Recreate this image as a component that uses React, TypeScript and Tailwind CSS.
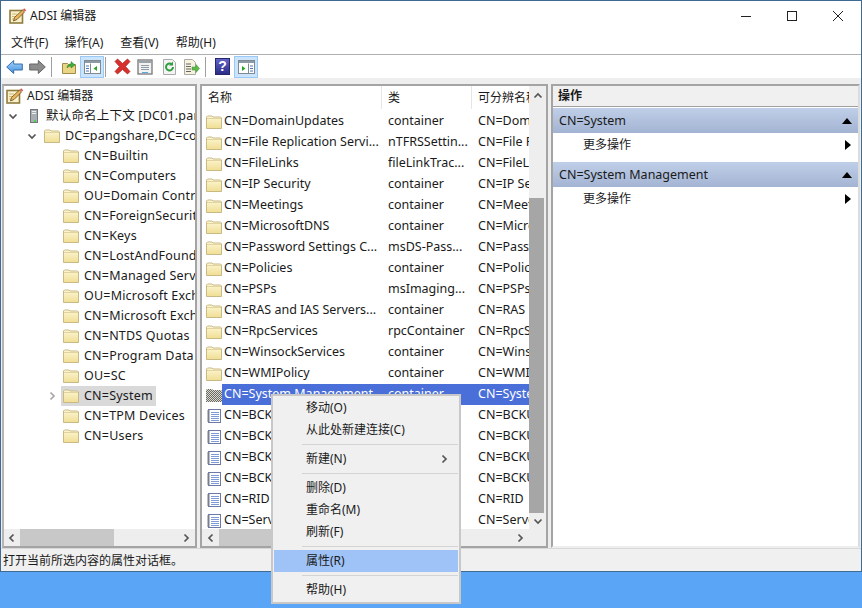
import React from "react";

const font = { fontFamily: '"Noto Sans", "Noto Sans CJK SC", sans-serif' };

function Folder({ hatched = false }: { hatched?: boolean }) {
  if (hatched) {
    return (
      <svg width="16" height="16" viewBox="0 0 16 16" className="shrink-0">
        <defs>
          <pattern id="hatch" width="2" height="2" patternUnits="userSpaceOnUse">
            <rect width="2" height="2" fill="#f0dc8c" />
            <rect width="1" height="1" fill="#5468a8" />
            <rect x="1" y="1" width="1" height="1" fill="#5468a8" />
          </pattern>
        </defs>
        <path d="M0 15V3l1-1h5l1 1h8l1 1v11z" fill="url(#hatch)" />
      </svg>
    );
  }
  return (
    <svg width="16" height="16" viewBox="0 0 16 16" className="shrink-0">
      <defs>
        <linearGradient id="fold" x1="0" y1="0" x2="0" y2="1">
          <stop offset="0" stopColor="#fdf7d6" />
          <stop offset="1" stopColor="#f0de93" />
        </linearGradient>
      </defs>
      <path d="M0.5 14.5V3l1-1h4.5l1 1h7.5l1 1v10.5z" fill="url(#fold)" stroke="#c9b985" />
      <path d="M1 4.5h14" stroke="#e2d49e" />
    </svg>
  );
}

function DocIcon() {
  return (
    <svg width="16" height="16" viewBox="0 0 16 16" className="shrink-0">
      <rect x="2.5" y="1.5" width="12" height="13" fill="#fff" stroke="#6d7aa8" />
      <path d="M1 3h3M1 5h3M1 7h3M1 9h3M1 11h3M1 13h3" stroke="#808080" />
      <path d="M5 4.5h8M5 6.5h8M5 8.5h8M5 10.5h8M5 12.5h8" stroke="#7f9bd6" />
    </svg>
  );
}

function AdsiIcon() {
  return (
    <svg width="18" height="18" viewBox="0 0 18 18" className="shrink-0">
      <rect x="1" y="3.5" width="12.5" height="12.5" fill="#f8f1cc" stroke="#8f7d3e" strokeWidth="1.6" />
      <path d="M3 7h5M3 9.5h4M3 12h3" stroke="#cdb974" />
      <path d="M4.5 14l1-3.5L13.5 3l2 2L8 12.5z" fill="#eab65c" stroke="#6b4a1e" strokeWidth="0.8" />
      <path d="M14 2.5l2 2 1.2-1.2-2-2z" fill="#d9534f" />
    </svg>
  );
}

function ServerIcon() {
  return (
    <svg width="12" height="16" viewBox="0 0 12 16" className="shrink-0 mr-[1px]">
      <rect x="2.5" y="1.5" width="7" height="13" fill="#a9aeb3" stroke="#70767b" />
      <path d="M4 3.5h4M4 5.5h4" stroke="#eceeef" />
      <rect x="6" y="12" width="2" height="2" fill="#4fd04f" />
    </svg>
  );
}

function Chevron({ dir, color = "#555" }: { dir: "down" | "right" | "left" | "up"; color?: string }) {
  const d = {
    down: "M1.5 3.5 5 7l3.5-3.5",
    right: "M3.5 1.5 7 5 3.5 8.5",
    left: "M6.5 1.5 3 5l3.5 3.5",
    up: "M1.5 6.5 5 3l3.5 3.5",
  }[dir];
  return (
    <svg width="10" height="10" viewBox="0 0 10 10" className="shrink-0">
      <path d={d} fill="none" stroke={color} strokeWidth="1.7" />
    </svg>
  );
}

function Tb({ children, active = false }: { children: React.ReactNode; active?: boolean }) {
  return (
    <div
      className={
        "w-[24px] h-[22px] flex items-center justify-center border " +
        (active ? "bg-[#cce4fb] border-[#99c9f8]" : "border-transparent")
      }
    >
      {children}
    </div>
  );
}

const PaneToggle = ({ right }: { right?: boolean }) => (
  <svg width="17" height="16" viewBox="0 0 17 16">
    <rect x="0.5" y="1.5" width="16" height="13" fill="#fff" stroke="#7e8a94" />
    <rect x="1" y="2" width="15" height="2" fill="#8d99a3" />
    {right ? (
      <>
        <path d="M4 7v5l3.5-2.5z" fill="#27a327" />
        <path d="M10.5 4.5v10" stroke="#7e8a94" />
        <path d="M12 7h3M12 9.5h3M12 12h3" stroke="#4a74b0" />
      </>
    ) : (
      <>
        <path d="M6.5 4.5v10" stroke="#7e8a94" />
        <path d="M2 7h3M2 9.5h3M2 12h3" stroke="#4a74b0" />
        <path d="M13 7v5l-3.5-2.5z" fill="#27a327" />
      </>
    )}
  </svg>
);

function Toolbar() {
  return (
    <div className="h-[23px] flex items-center bg-white pl-[5px] shrink-0">
      <svg width="17" height="16" viewBox="0 0 17 16">
        <defs>
          <linearGradient id="bk" x1="0" y1="0" x2="0" y2="1">
            <stop offset="0" stopColor="#a8d4fa" />
            <stop offset="1" stopColor="#3f8fe0" />
          </linearGradient>
        </defs>
        <path d="M0.7 8l7-6.5V5h8.6v6H7.7v3.5z" fill="url(#bk)" stroke="#3a6ea8" />
      </svg>
      <svg width="17" height="16" viewBox="0 0 17 16" className="ml-[6px]">
        <path d="M16.3 8l-7-6.5V5H0.7v6h8.6v3.5z" fill="#8c8c8c" stroke="#666" />
      </svg>
      <div className="w-px h-[20px] bg-[#a0a0a0] ml-[5px]" />
      <div className="ml-[9px] mr-[3px]">
        <svg width="16" height="16" viewBox="0 0 16 16" className="block">
          <path d="M1.5 14.5v-10h5l1 1h7v9z" fill="#e9d583" stroke="#a08c4a" />
          <path d="M6 9c0-3 2-4 4-4V2.5l4 3.5-4 3V7c-2 0-3 1-4 2z" fill="#3fae3f" stroke="#2a7a2a" strokeWidth="0.5" />
        </svg>
      </div>
      <Tb active>
        <PaneToggle />
      </Tb>
      <div className="w-px h-[20px] bg-[#a0a0a0] ml-[1px]" />
      <div className="ml-[8px] flex items-center">
        <svg width="17" height="17" viewBox="0 0 17 17" className="block">
          <path d="M1 3.5 3.5 1 8.5 5.5 13.5 1 16 3.5 11.5 8.5 16 13.5 13.5 16 8.5 11.5 3.5 16 1 13.5 5.5 8.5z" fill="#d8302c" stroke="#a82020" strokeWidth="0.7" />
        </svg>
      </div>
      <div className="ml-[6px]">
        <svg width="16" height="16" viewBox="0 0 16 16" className="block">
          <rect x="1" y="1" width="14" height="14" fill="#f2f2f2" stroke="#808080" strokeWidth="1.4" />
          <rect x="2" y="2" width="12" height="2" fill="#9aa3ab" />
          <path d="M4 6.5h8M4 8.5h8M4 10.5h8" stroke="#8d9aa8" />
          <rect x="5" y="13" width="6" height="1" fill="#5aa8e0" />
        </svg>
      </div>
      <div className="ml-[9px]">
        <svg width="15" height="16" viewBox="0 0 15 16" className="block">
          <path d="M1.5 0.5h9l3 3v12h-12z" fill="#f4f4f4" stroke="#aaa" />
          <path d="M11 8a3.5 3.5 0 1 1-1-2.5" fill="none" stroke="#2f9e3f" strokeWidth="2" />
          <path d="M11 2.5v4H7z" fill="#2f9e3f" />
        </svg>
      </div>
      <div className="ml-[6px]">
        <svg width="17" height="16" viewBox="0 0 17 16" className="block">
          <path d="M1.5 0.5h8l3 3v12h-11z" fill="#f6f2dc" stroke="#aaa" />
          <path d="M3 5h5M3 7.5h5M3 10h5M3 12.5h5" stroke="#666" />
          <path d="M9 8h4V5.5l3.5 4-3.5 4V11H9z" fill="#5dbb4a" stroke="#3c8c30" strokeWidth="0.5" />
        </svg>
      </div>
      <div className="w-px h-[20px] bg-[#a0a0a0] ml-[5px]" />
      <div className="ml-[9px] mr-[4px]">
        <div
          className="w-[15px] h-[17px] bg-gradient-to-b from-[#6464c8] to-[#2c2c88] border border-[#26266a] text-white text-[14px] font-bold leading-[15px] text-center"
          style={{ fontFamily: '"Liberation Sans", sans-serif' }}
        >
          ?
        </div>
      </div>
      <Tb active>
        <PaneToggle right />
      </Tb>
    </div>
  );
}

function TreeRow({
  indent,
  chevron,
  icon,
  label,
  selected = false,
  iconGap = 0,
}: {
  indent: number;
  chevron?: "down" | "right";
  icon: React.ReactNode;
  label: string;
  selected?: boolean;
  iconGap?: number;
}) {
  return (
    <div className="h-[20px] flex items-center whitespace-nowrap" style={{ paddingLeft: indent }}>
      <div className="w-[14px] pr-[4px] flex justify-center shrink-0">
        {chevron && <Chevron dir={chevron} color={selected ? "#a6a6a6" : "#555"} />}
      </div>
      <div
        className={"flex items-center h-[20px] pl-[2px] pr-[3px] " + (selected ? "bg-[#d9d9d9]" : "")}
      >
        <div className="flex shrink-0" style={{ marginLeft: iconGap }}>
          {icon}
        </div>
        <span className="ml-[5px] tracking-[0.2px]">{label}</span>
      </div>
    </div>
  );
}

const treeItems = [
  "CN=Builtin",
  "CN=Computers",
  "OU=Domain Controllers",
  "CN=ForeignSecurityPrincipals",
  "CN=Keys",
  "CN=LostAndFound",
  "CN=Managed Service Accounts",
  "OU=Microsoft Exchange",
  "CN=Microsoft Exchange",
  "CN=NTDS Quotas",
  "CN=Program Data",
  "OU=SC",
  "CN=System",
  "CN=TPM Devices",
  "CN=Users",
];

const rows: [string, string, string][] = [
  ["CN=DomainUpdates", "container", "CN=DomainUpdates"],
  ["CN=File Replication Servi...", "nTFRSSettin...", "CN=File Replication"],
  ["CN=FileLinks", "fileLinkTrac...", "CN=FileLinks"],
  ["CN=IP Security", "container", "CN=IP Security"],
  ["CN=Meetings", "container", "CN=Meetings"],
  ["CN=MicrosoftDNS", "container", "CN=MicrosoftDNS"],
  ["CN=Password Settings C...", "msDS-Pass...", "CN=Password"],
  ["CN=Policies", "container", "CN=Policies"],
  ["CN=PSPs", "msImaging...", "CN=PSPs"],
  ["CN=RAS and IAS Servers...", "container", "CN=RAS"],
  ["CN=RpcServices", "rpcContainer", "CN=RpcServices"],
  ["CN=WinsockServices", "container", "CN=WinsockServices"],
  ["CN=WMIPolicy", "container", "CN=WMIPolicy"],
  ["CN=System Management", "container", "CN=System"],
  ["CN=BCKUPKEY_1", "secret", "CN=BCKUPKEY"],
  ["CN=BCKUPKEY_2", "secret", "CN=BCKUPKEY"],
  ["CN=BCKUPKEY_3", "secret", "CN=BCKUPKEY"],
  ["CN=BCKUPKEY_4", "secret", "CN=BCKUPKEY"],
  ["CN=RID Manager$", "rIDManager", "CN=RID"],
  ["CN=Server", "samServer", "CN=Server"],
];

function ListRow({ r, i }: { r: [string, string, string]; i: number }) {
  const selected = i === 13;
  const doc = i > 13;
  return (
    <div className="h-[21px] flex items-center whitespace-nowrap shrink-0">
      <div className="w-[20px] pl-[4px] shrink-0 flex">
        {doc ? <DocIcon /> : <Folder hatched={selected} />}
      </div>
      <div className={"flex h-[21px] items-center flex-1 min-w-0 " + (selected ? "bg-[#4a6fd8] text-white" : "")}>
        <div className="w-[166px] pl-[2px] overflow-hidden shrink-0">{r[0]}</div>
        <div className="w-[90px] overflow-hidden shrink-0">{r[1]}</div>
        <div className="flex-1 min-w-0 overflow-hidden">{r[2]}</div>
      </div>
    </div>
  );
}

function HScroll({ pad, thumb, grow }: { pad: number; thumb: number; grow?: boolean }) {
  return (
    <div className="h-[17px] bg-[#eeeeee] flex items-center shrink-0">
      <div className="flex justify-center shrink-0" style={{ width: pad }}>
        <Chevron dir="left" />
      </div>
      <div className="h-[17px] bg-[#c8c8c8] shrink-0" style={{ width: thumb }} />
      <div className="flex-1" />
      <div className="flex justify-center w-[19px] shrink-0">
        <Chevron dir="right" />
      </div>
      {grow && <div className="w-[17px] shrink-0" />}
    </div>
  );
}

function ActionGroup({ title }: { title: string }) {
  return (
    <div className="mb-[7px]">
      <div className="h-[25px] bg-gradient-to-b from-[#c0cfe8] to-[#a3b4d3] flex items-center pl-[6px] pr-[6px] justify-between">
        <span className="pt-[1px]">{title}</span>
        <svg width="10" height="6" viewBox="0 0 10 6">
          <path d="M0 6 5 0l5 6z" fill="#000" />
        </svg>
      </div>
      <div className="h-[22px] flex items-center pt-[2px] pl-[30px] pr-[7px] justify-between text-[12px]">
        <span>更多操作</span>
        <svg width="6" height="10" viewBox="0 0 6 10">
          <path d="M0 0l6 5-6 5z" fill="#000" />
        </svg>
      </div>
    </div>
  );
}

function MenuItem({
  label,
  active = false,
  arrow = false,
}: {
  label: string;
  active?: boolean;
  arrow?: boolean;
}) {
  return (
    <div className={"h-[22px] flex items-center pl-[32px] pr-[9px] justify-between " + (active ? "bg-[#9fc3f6]" : "")}>
      <span>{label}</span>
      {arrow && <Chevron dir="right" color="#555" />}
    </div>
  );
}

const MenuSep = () => <div className="h-px bg-[#d4d4d4] ml-[28px] my-[3px]" />;

export default function App() {
  return (
    <div
      className="relative w-[862px] h-[608px] overflow-hidden bg-[#5aa5f5] text-[12.5px] text-[#1a1a1a]"
      style={font}
    >
      <div className="w-[862px] h-[572px] bg-white border border-[#3f6a94] flex flex-col">
        {/* title */}
        <div className="h-[31px] flex items-center pl-[8px] pb-[1px] shrink-0 bg-white text-[12px]">
          <AdsiIcon />
          <span className="ml-[3px]">ADSI 编辑器</span>
          <div className="flex-1" />
          <svg width="12" height="12" viewBox="0 0 12 12" className="mr-[34px]">
            <path d="M1 6.5h10" stroke="#222" />
          </svg>
          <svg width="12" height="12" viewBox="0 0 12 12" className="mr-[34px]">
            <rect x="1.5" y="1.5" width="9" height="9" fill="none" stroke="#222" />
          </svg>
          <svg width="12" height="12" viewBox="0 0 12 12" className="mr-[17px]">
            <path d="M1 1l10 10M11 1 1 11" stroke="#222" />
          </svg>
        </div>
        {/* menu */}
        <div className="h-[23px] flex items-center pl-[10px] gap-[17px] border-b border-[#b0b0b0] shrink-0 bg-white text-[12px]">
          <span className="-mr-[1px]">文件(F)</span>
          <span>操作(A)</span>
          <span>查看(V)</span>
          <span>帮助(H)</span>
        </div>
        <Toolbar />
        {/* main */}
        <div className="flex-1 min-h-0 bg-[#eeeeee] pt-[6px] flex gap-[3px] pl-[1px] pr-[1px]">
          {/* tree */}
          <div className="w-[195px] shrink-0 bg-white border-2 border-[#a4a4a4] border-l-[#b5b5b5] flex flex-col">
            <div className="flex-1 min-h-0 overflow-hidden">
              <div className="h-[20px] flex items-center pl-[2px] whitespace-nowrap">
                <AdsiIcon />
                <span className="ml-[3px] text-[12px]">ADSI 编辑器</span>
              </div>
              <TreeRow
                indent={4}
                chevron="down"
                iconGap={4}
                icon={<ServerIcon />}
                label="默认命名上下文 [DC01.pangshare,DC=com]"
              />
              <TreeRow indent={23} chevron="down" iconGap={1} icon={<Folder />} label="DC=pangshare,DC=com" />
              {treeItems.map((t) => (
                <TreeRow
                  key={t}
                  indent={43}
                  chevron={t === "CN=System" ? "right" : undefined}
                  icon={<Folder />}
                  label={t}
                  selected={t === "CN=System"}
                />
              ))}
            </div>
            <HScroll pad={16} thumb={94} />
          </div>
          {/* list */}
          <div className="w-[348px] shrink-0 bg-white border-2 border-[#a4a4a4] flex flex-col">
            <div className="flex-1 min-h-0 flex">
              <div className="flex-1 min-w-0 flex flex-col overflow-hidden">
                <div className="h-[25px] pb-[2px] shrink-0 flex items-center whitespace-nowrap text-[12px]">
                  <div className="w-[180px] pl-[6px] h-[23px] flex items-center border-r border-[#e5e5e5] shrink-0">名称</div>
                  <div className="w-[90px] pl-[6px] h-[23px] flex items-center border-r border-[#e5e5e5] shrink-0">类</div>
                  <div className="flex-1 pl-[6px] overflow-hidden">可分辨名称</div>
                </div>
                {rows.map((r, i) => (
                  <ListRow key={r[0] + i} r={r} i={i} />
                ))}
              </div>
              <div className="w-[17px] shrink-0 bg-[#eeeeee] flex flex-col items-center">
                <div className="h-[19px] flex items-center shrink-0">
                  <Chevron dir="up" />
                </div>
                <div className="h-[93px] shrink-0" />
                <div className="w-[15px] h-[315px] bg-[#a6a6a6] shrink-0 self-start" />
                <div className="h-[15px] flex items-center shrink-0">
                  <Chevron dir="down" />
                </div>
              </div>
            </div>
            <HScroll pad={17} thumb={221} grow />
          </div>
          {/* actions */}
          <div className="flex-1 min-w-0 bg-white border-2 border-[#a4a4a4] border-r-[#dcdcdc] border-b-[#eeeeee]">
            <div className="h-[21px] bg-[#f0f0f0] flex items-center pl-[5px] border-b border-[#a0a0a0] font-semibold text-[12px]">
              操作
            </div>
            <div className="h-[1px]" />
            <ActionGroup title="CN=System" />
            <ActionGroup title="CN=System Management" />
          </div>
        </div>
        {/* status */}
        <div className="h-[23px] shrink-0 bg-[#f0f0f0] flex items-center pl-[2px] pt-[1px] border-t border-[#d8d8d8] text-[12px]">
          打开当前所选内容的属性对话框。
        </div>
      </div>

      {/* context menu */}
      <div className="absolute left-[271px] top-[394px] w-[190px] h-[210px] bg-[#f0f0f0] border-2 border-[#c8c8c8] pt-[1px] px-[1px] text-[12px]">
        <MenuItem label="移动(O)" />
        <MenuItem label="从此处新建连接(C)" />
        <MenuSep />
        <MenuItem label="新建(N)" arrow />
        <MenuSep />
        <MenuItem label="删除(D)" />
        <MenuItem label="重命名(M)" />
        <MenuItem label="刷新(F)" />
        <MenuSep />
        <MenuItem label="属性(R)" active />
        <MenuSep />
        <MenuItem label="帮助(H)" />
      </div>
    </div>
  );
}
